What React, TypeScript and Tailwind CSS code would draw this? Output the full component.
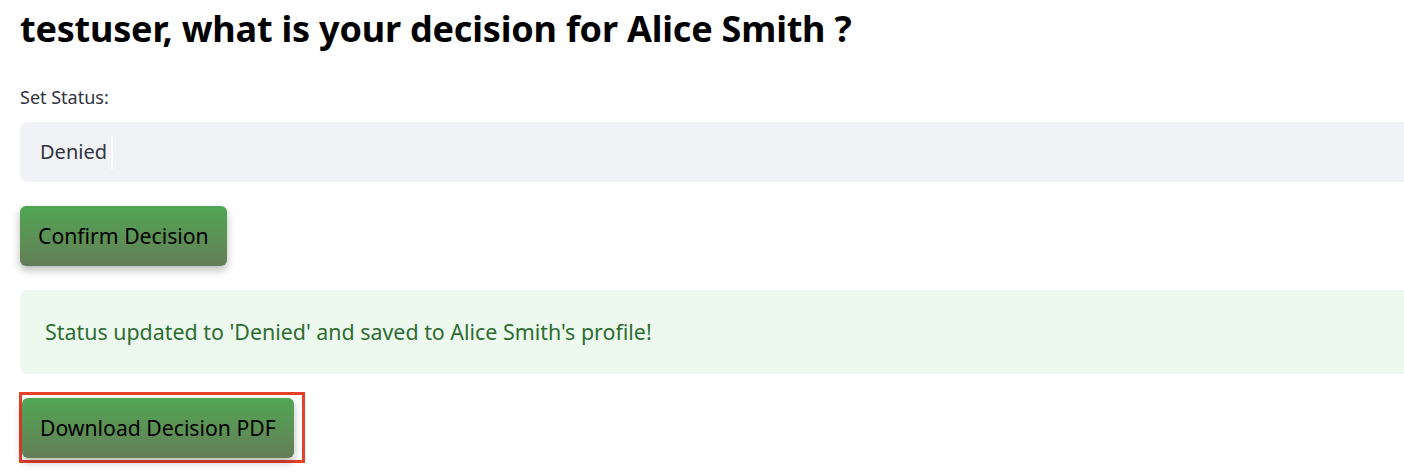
import React from 'react';

const font = { fontFamily: '"Noto Sans", "Open Sans", sans-serif' };

const GreenButton: React.FC<{ label: string; className?: string }> = ({ label, className = '' }) => (
  <button
    className={`h-[60px] px-[18px] rounded-[6px] bg-gradient-to-b from-[#4fa653] to-[#627e56] text-black text-[21.2px] shadow-[0_4px_9px_rgba(0,0,0,0.28)] ${className}`}
  >
    {label}
  </button>
);

const App: React.FC = () => {
  return (
    <div className="w-[1404px] h-[476px] overflow-hidden bg-white text-[#31333f]" style={font}>
      <div className="w-[1440px] pl-[20px] pt-[4px] flex flex-col">
        <h1 className="text-[36px] font-bold text-black leading-[50px] tracking-[-0.2px]">
          testuser, what is your decision for Alice Smith ?
        </h1>

        <label className="mt-[31px] text-[18px] leading-[24px] text-[#31333f]">Set Status:</label>
        <div className="mt-[13px] h-[60px] rounded-[8px] bg-[#f0f2f6] flex items-center pl-[20px] text-[20px] text-[#31333f]">
          <span>Denied</span>
          <span className="ml-[4px] w-[2px] h-[33px] bg-white"></span>
        </div>

        <div className="mt-[24px] flex">
          <GreenButton label="Confirm Decision" />
        </div>

        <div className="mt-[24px] h-[84px] rounded-[8px] bg-[#edf8ee] flex items-center pl-[25px] text-[21.4px] text-[#2e6d31]">
          Status updated to 'Denied' and saved to Alice Smith's profile!
        </div>

        <div className="mt-[18px] -ml-[1px] flex">
          <div className="border-[3px] border-[#e8412a] pt-[3px] pr-[8px] pb-[2px]">
            <GreenButton label="Download Decision PDF" className="px-[17px]" />
          </div>
        </div>
      </div>
    </div>
  );
};

export default App;
